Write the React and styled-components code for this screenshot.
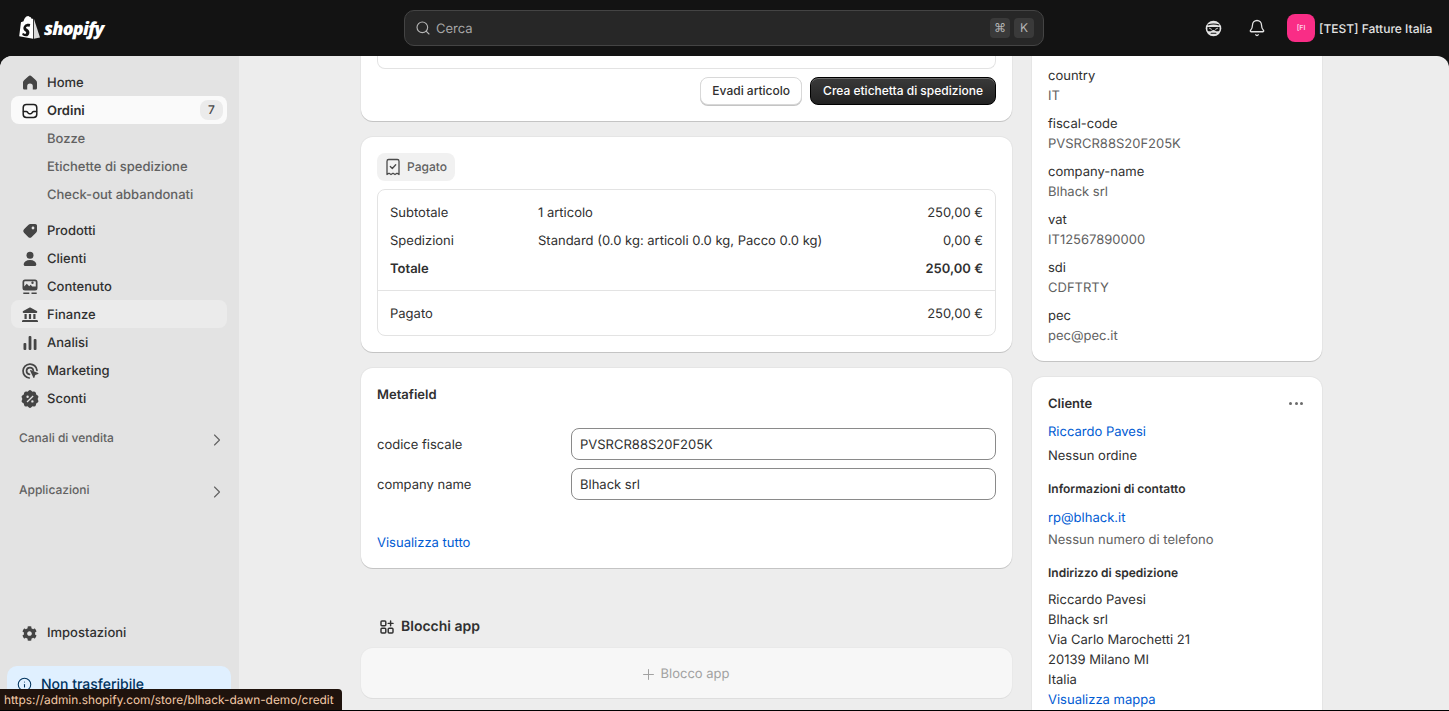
import React from "react";
import styled, { createGlobalStyle, css } from "styled-components";
import { Search, ChevronRight, Plus, Info, Bell } from "lucide-react";
import { FaCog } from "react-icons/fa";

const Global = createGlobalStyle`
  html, body { margin: 0; padding: 0; height: 100%; overflow: hidden; background: #131313; }
  body { font-family: Inter, "Noto Sans", sans-serif; font-size: 13px; line-height: 20px; color: #303030; -webkit-font-smoothing: antialiased; text-rendering: geometricPrecision; }
  * { box-sizing: border-box; }
`;

/* Inter sits one pixel lower in the reference than in this browser's line box */
const textLine = css`
  height: 20px;
  padding-top: 1px;
`;

const Shell = styled.div`
  position: relative;
  width: 1449px; height: 711px;
  display: flex; flex-direction: column;
  border-bottom: 1px solid #000;
  overflow: hidden;
  background: #131313;
  opacity: 0.999;
`;
const TopBar = styled.header`
  flex: 0 0 56px;
  display: grid;
  grid-template-columns: 404px 640px 1fr;
  align-items: center;
  background: #131313;
`;
const Brand = styled.div`
  display: flex; align-items: center; gap: 4px;
  padding-left: 19px;
`;
const Wordmark = styled.span`
  font-family: "Open Sans", sans-serif;
  font-weight: 800; font-style: italic;
  font-size: 18px; line-height: 24px;
  letter-spacing: -0.8px;
  padding-top: 1px;
  color: #fff;
`;
const SearchBox = styled.div`
  height: 36px;
  display: flex; align-items: center; gap: 4px;
  padding: 0 9px 0 10px;
  background: #272727;
  border: 1px solid #444;
  border-radius: 10px;
  color: #b5b5b5;
`;
const SearchLabel = styled.span`
  flex: 1;
  margin-left: 1px;
  padding-top: 2px;
  font-size: 13px; color: #a6a6a6;
`;
const Key = styled.kbd`
  width: 20px; height: 20px;
  display: flex; align-items: center; justify-content: center;
  font-family: Inter, "DejaVu Sans", sans-serif;
  font-size: 12px;
  color: #b5b5b5;
  background: #3a3a3a;
  border-radius: 4px;
`;
const TopRight = styled.div`
  display: flex; align-items: center;
  padding-left: 160px;
  color: #e3e3e3;
`;
const IconSlot = styled.span`
  display: flex; align-items: center; justify-content: center;
  width: 18px; height: 18px;
  margin-right: ${p => p.$mr}px;
`;
const Avatar = styled.span`
  width: 28px; height: 28px; margin-right: 4px;
  display: flex; align-items: center; justify-content: center;
  background: #f92d86; border-radius: 8px;
  font-size: 7px; font-weight: 600; color: #ffd3e6;
`;
const Store = styled.span`
  font-size: 12px; color: #e3e3e3; white-space: nowrap; font-weight: 450;
  padding-top: 1px;
`;

const Frame = styled.div`
  flex: 1; min-height: 0;
  display: flex;
  border-radius: 12px 12px 0 0;
  overflow: hidden;
  background: #ededed;
`;
const Side = styled.nav`
  flex: 0 0 239px;
  display: flex; flex-direction: column;
  padding-top: 12px;
  background: #e3e3e3;
`;
const Row = styled.div`
  height: 28px; margin: 0 12px 0 11px;
  display: flex; align-items: center;
  padding: 2px 4px 0 9px;
  border-radius: 8px;
  font-weight: ${p => (p.$active ? 600 : 500)};
  color: #303030;
  background: ${p => (p.$active ? "#fafafa" : p.$hover ? "#ebebeb" : "transparent")};
  margin-top: ${p => p.$mt || 0}px;
`;
const RowIcon = styled.span`
  flex: 0 0 27px; height: 20px;
  display: flex; align-items: center;
  color: #454545;
`;
const RowLabel = styled.span`
  flex: 1;
`;
const Count = styled.span`
  width: 23px; height: 20px;
  margin-top: -2px;
  display: flex; align-items: center; justify-content: center;
  border-radius: 8px;
  background: #ebebeb;
  font-size: 12px; font-weight: 450; color: #4a4a4a;
`;
const SubRow = styled.div`
  height: 28px; padding: 2px 0 0 47px;
  display: flex; align-items: center;
  font-weight: 450; color: #616161;
`;
const Section = styled.div`
  height: 28px; margin-top: ${p => p.$mt}px;
  display: flex; align-items: center; justify-content: space-between;
  padding: 0 12px 0 19px;
  font-size: 12px; font-weight: 550; color: #616161;
`;
const Chevron = styled.span`
  display: flex; color: #616161; margin-top: 4px;
`;
const Spacer = styled.div` flex: 1; `;
const Notice = styled.div`
  flex: 0 0 44px;
  margin: 20px 8px 0 7px;
  padding: 9px 10px 0;
  display: flex; align-items: flex-start; gap: 9px;
  background: #e0f0ff;
  border-radius: 10px 10px 0 0;
  color: #00345f;
  font-size: 14px;
  font-weight: 500;
  & > svg { margin-top: 2px; }
`;

const Main = styled.main`
  flex: 1; min-width: 0;
  display: grid;
  grid-template-columns: 651px 290px;
  column-gap: 20px;
  align-content: start;
  padding-left: 122px;
  overflow: hidden;
`;
const Col = styled.div`
  display: flex; flex-direction: column; gap: 16px;
  min-width: 0;
`;
const Card = styled.section`
  background: #fff;
  border-radius: ${p => (p.$cut ? "0 0 12px 12px" : "12px")};
  padding: ${p => p.$pad || "16px"};
  box-shadow: 0 1px 0 rgba(26,26,26,.16), 0 0 0 1px rgba(26,26,26,.035);
`;
const CutBox = styled.div`
  height: 13px;
  border: 1px solid #e3e3e3; border-top: 0;
  border-radius: 0 0 8px 8px;
`;
const Actions = styled.div`
  display: flex; justify-content: flex-end; gap: 8px;
  margin-top: 8px;
`;
const Button = styled.button`
  height: 28px;
  padding: 0 ${p => (p.$primary ? 12 : 11)}px;
  font: 550 12px/16px Inter, sans-serif;
  border-radius: 8px;
  border: ${p => (p.$primary ? "1px solid #000" : "1px solid #d8d8d8")};
  color: ${p => (p.$primary ? "#fff" : "#303030")};
  background: ${p => (p.$primary ? "linear-gradient(#3a3a3a, #222)" : "#fff")};
  box-shadow: ${p => (p.$primary ? "inset 0 1px 0 rgba(255,255,255,.25)" : "0 1px 0 #c4c4c4")};
`;
const Badge = styled.span`
  width: 78px; height: 28px;
  display: flex; align-items: center; gap: 4px;
  padding-left: 6px;
  border-radius: 8px;
  background: #f1f1f1;
  font-size: 12px; font-weight: 450; color: #616161;
`;
const Box = styled.div`
  margin-top: 8px;
  border: 1px solid #e3e3e3;
  border-radius: 8px;
`;
const BoxPart = styled.div`
  padding: 8px 12px;
  border-top: ${p => (p.$line ? "1px solid #e3e3e3" : "0")};
`;
const SumRow = styled.div`
  height: 28px;
  padding-top: 2px;
  display: grid; grid-template-columns: 148px 1fr auto;
  align-items: center;
  font-weight: ${p => (p.$bold ? 600 : 400)};
`;
const Title = styled.h2`
  ${textLine}
  margin: 0; font-size: 13px; line-height: 20px; font-weight: 600; color: #303030;
`;
const Fields = styled.div`
  margin-top: 24px;
  display: flex; flex-direction: column; gap: 8px;
`;
const Field = styled.div`
  display: grid; grid-template-columns: 194px 1fr; align-items: center;
`;
const FieldLabel = styled.span`
  ${textLine}
`;
const Input = styled.div`
  height: 32px; padding: 2px 8px 0 8px;
  display: flex; align-items: center;
  border: 1px solid #8a8a8a; border-radius: 8px;
  background: #fff;
  font-weight: 400;
`;
const Link = styled.a`
  ${textLine}
  display: block; color: #005bd3; margin-top: ${p => p.$mt || 0}px; font-weight: 400;
`;
const BlocksHead = styled.div`
  margin-top: 33px;
  display: flex; align-items: center; gap: 6px;
  padding-left: 18px;
  font-size: 14px;
  font-weight: 600;
  color: #303030;
`;
const BlockSlot = styled.div`
  height: 50px; margin-top: -5px;
  padding: 2px 4px 0 0;
  display: flex; align-items: center; justify-content: center; gap: 4px;
  background: #f7f7f7;
  border-radius: 12px;
  box-shadow: 0 1px 0 rgba(26,26,26,.05), 0 0 0 1px rgba(26,26,26,.02);
  color: #a1a1a1;
`;
const Attr = styled.div`
  margin-bottom: 8px;
  &:last-child { margin-bottom: 0; }
`;
const Muted = styled.div`
  ${textLine}
  color: #616161; margin-top: ${p => p.$mt || 0}px;
`;
const Plain = styled.div`
  ${textLine}
  color: #303030; margin-top: ${p => p.$mt || 0}px;
`;
const CardHead = styled.div`
  display: flex; align-items: center; justify-content: space-between;
  margin-bottom: 8px;
`;
const Dots = styled.span`
  display: flex; gap: 2.5px; margin-right: 3px;
  & > i { width: 3px; height: 3px; border-radius: 50%; background: #6b6b6b; }
`;
const Small = styled.h3`
  margin: 14px 0 0; font-size: 12px; line-height: 20px; font-weight: 600; color: #303030;
`;
const StatusTip = styled.div`
  position: absolute; left: 0; bottom: -1px;
  height: 22px; width: 342px;
  padding-left: 4px;
  display: flex; align-items: center;
  background: #1f130d;
  border-radius: 0 4px 0 0;
  font-size: 11.88px; color: #f4cba9;
  white-space: nowrap;
`;

const S = ({ children, fill = "currentColor", size = 20, ...r }) => (
  <svg width={size} height={size} viewBox="0 0 20 20" fill={fill} {...r}>{children}</svg>
);
const stroke = { fill: "none", stroke: "currentColor", strokeWidth: 1.5, strokeLinecap: "round", strokeLinejoin: "round" };

const icons = {
  home: <S><path d="M8.2 3.4a2.6 2.6 0 0 1 3.6 0l3.9 3.6c.9.8 1.3 1.8 1.3 2.9v5.1c0 1-.7 1.6-1.6 1.6h-2.6v-3.4a2.8 2.8 0 0 0-5.6 0v3.4H4.6c-.9 0-1.6-.7-1.6-1.6V9.9c0-1.1.4-2.1 1.3-2.9z"/></S>,
  order: <S><g {...stroke} stroke="#1f1f1f"><rect x="3.2" y="3.5" width="13.6" height="13" rx="3.2"/><path d="M3.5 10.5h2.8c.8 0 1.1.5 1.5 1.1.4.7.8 1.1 1.5 1.1h1.4c.7 0 1.1-.4 1.5-1.1.4-.6.7-1.1 1.5-1.1h2.8"/></g></S>,
  tag: <S><path fillRule="evenodd" d="M10.6 3h4.6C16.2 3 17 3.8 17 4.800v4.600c0 .9-.4 1.700-1 2.300l-4.300 4.300a2.500 2.500 0 0 1-3.500 0l-4.200-4.200a2.500 2.500 0 0 1 0-3.500L8.300 4c.6-.6 1.400-1 2.300-1zM13 8.400a1.400 1.400 0 1 0 0-2.800 1.400 1.400 0 0 0 0 2.800z"/></S>,
  person: <S><circle cx="10" cy="6.300" r="3.500"/><path d="M10 11c-3.700 0-6 1.800-6.300 3.900-.2 1.200.6 2.100 1.800 2.100h9c1.200 0 2-.9 1.800-2.100C16 12.800 13.700 11 10 11z"/></S>,
  content: <S><path fillRule="evenodd" d="M5 2.500h10A2.500 2.500 0 0 1 17.500 5v6a2.500 2.500 0 0 1-2.500 2.500H5A2.500 2.500 0 0 1 2.500 11V5A2.500 2.500 0 0 1 5 2.500zM4.200 9.500l2.600-2.800 2.400 2.500 1.500-1.400 1.500 1.600h3.600V5c0-.5-.3-.8-.8-.8H5c-.5 0-.8.3-.8.8zM12.500 7a1.200 1.200 0 1 0 0-2.400 1.200 1.200 0 0 0 0 2.400z"/><path d="M3.300 15.500h6v1.500h-6zM11.500 15.500h5.200v1.500h-5.200z"/></S>,
  bank: <S><path d="M9.200 2.700c.5-.3 1.100-.3 1.600 0l6 3.300c.9.500.5 1.900-.5 1.900H3.700c-1 0-1.400-1.400-.5-1.900z"/><path d="M4.500 9h2.200v5H4.500zM8.900 9h2.200v5H8.900zM13.300 9h2.200v5h-2.200zM3.300 15h13.400c.7 0 1.300.6 1.300 1.300v.700H2v-.700c0-.7.600-1.300 1.300-1.300z"/></S>,
  bars: <S><rect x="3.500" y="10" width="2.800" height="7" rx="1"/><rect x="8.600" y="3" width="2.800" height="14" rx="1"/><rect x="13.700" y="6" width="2.800" height="11" rx="1"/></S>,
  market: <S><g {...stroke} strokeWidth="1.700"><path d="M17 9.300a7 7 0 1 0-7.700 7.700"/><path d="M13.300 9.500A3.400 3.400 0 1 0 9.500 13.300"/></g><path d="M10 9.600c0-.4.400-.6.700-.5l7.500 2.900c.4.200.4.800 0 .9l-2.900 1-1 2.900c-.1.400-.7.400-.9 0z"/></S>,
  discount: <S><path fillRule="evenodd" d="M8.600 1.800a2 2 0 0 1 2.800 0l1 .9 1.300-.2a2 2 0 0 1 2.200 1.600l.3 1.400 1.200.7a2 2 0 0 1 .8 2.600l-.6 1.200.6 1.200a2 2 0 0 1-.8 2.600l-1.200.7-.3 1.400a2 2 0 0 1-2.200 1.600l-1.300-.2-1 .9a2 2 0 0 1-2.800 0l-1-.9-1.300.2a2 2 0 0 1-2.200-1.600l-.3-1.400-1.200-.7a2 2 0 0 1-.8-2.600l.6-1.200-.6-1.200a2 2 0 0 1 .8-2.600l1.200-.7.3-1.400a2 2 0 0 1 2.200-1.600l1.300.2zM12.700 6.500 6.600 12.600l.9.900 6.100-6.100zM7.600 9a1.200 1.200 0 1 0 0-2.400 1.200 1.200 0 0 0 0 2.400zm4.800 4.600a1.200 1.200 0 1 0 0-2.400 1.200 1.200 0 0 0 0 2.400z"/></S>,
};

const Bag = () => (
  <svg width="21" height="24" viewBox="0 0 21 24">
    <path fill="#fff" d="M13.700 2.700 12.800 3c-.4-1.300-1.100-2.300-2.300-2.300h-.2C10 .3 9.600 0 9.200 0 6.400 0 5 3.500 4.600 5.300l-2 .6c-.6.200-.6.200-.7.800L.2 20.200 14 22.800V2.600z"/>
    <path fill="#d8d8d8" d="M14.800 2.500 21 21.400l-6.200 1.400z"/>
    <path fill="#131313" d="M11.300 8.300l-.8 2.500s-.9-.4-1.900-.4c-1.500 0-1.600.9-1.600 1.200 0 1.300 3.400 1.800 3.400 4.800 0 2.400-1.500 3.900-3.500 3.900-2.400 0-3.700-1.500-3.700-1.500l.7-2.100s1.300 1.100 2.300 1.100c.7 0 1-.5 1-1 0-1.700-2.800-1.800-2.800-4.500 0-2.300 1.700-4.600 5-4.600 1.300 0 1.900.6 1.900.6z"/>
  </svg>
);

const Sidekick = () => (
  <svg width="19" height="19" viewBox="0 0 20 20" fill="none" style={{ flex: "none" }}>
    <circle cx="10" cy="10" r="8.200" fill="#e3e3e3"/>
    <path d="M4 6.200c3.800-1.300 8.200-1.300 12 0" stroke="#131313" strokeWidth="1.100"/>
    <path d="M3.600 8.500h12.800v2.700c0 1-.7 1.600-1.600 1.600h-1.900c-1 0-1.400-1.200-2.900-1.200s-1.900 1.200-2.900 1.200H5.200c-.9 0-1.600-.6-1.600-1.600z" fill="#131313"/>
    <path d="M5.800 9.800l2 1M14.200 9.800l-2 1" stroke="#e3e3e3" strokeWidth="1" strokeLinecap="round"/>
    <path d="M7.500 15h5" stroke="#131313" strokeWidth="1.200" strokeLinecap="round"/>
  </svg>
);
const Receipt = () => (
  <svg width="20" height="20" viewBox="0 0 20 20" fill="none" stroke="#4a4a4a" strokeWidth="1.300" strokeLinecap="round" strokeLinejoin="round">
    <path d="M4 17.500V4.200C4 3.300 4.700 2.500 5.700 2.500h8.600c1 0 1.700.8 1.700 1.700v13.300l-2-1.300-2 1.300-2-1.300-2 1.300-2-1.300z"/>
    <path d="M7.300 9.500l2 2 3.400-3.800"/>
  </svg>
);
const Apps = () => (
  <svg width="16" height="16" viewBox="0 0 20 20" fill="none" stroke="#303030" strokeWidth="1.800" strokeLinecap="round" strokeLinejoin="round">
    <rect x="2.500" y="2.500" width="6" height="6" rx="1.200"/>
    <rect x="2.500" y="11.500" width="6" height="6" rx="1.200"/>
    <rect x="11.500" y="11.500" width="6" height="6" rx="1.200"/>
    <path d="M14.500 2.500v6M11.500 5.500h6"/>
  </svg>
);

const nav = [
  { icon: "tag", label: "Prodotti", mt: 8 },
  { icon: "person", label: "Clienti" },
  { icon: "content", label: "Contenuto" },
  { icon: "bank", label: "Finanze", hover: true },
  { icon: "bars", label: "Analisi" },
  { icon: "market", label: "Marketing" },
  { icon: "discount", label: "Sconti" },
];
const attrs = [
  ["country", "IT"],
  ["fiscal-code", "PVSRCR88S20F205K"],
  ["company-name", "Blhack srl"],
  ["vat", "IT12567890000"],
  ["sdi", "CDFTRTY"],
  ["pec", "pec@pec.it"],
];
const address = ["Blhack srl", "Via Carlo Marochetti 21", "20139 Milano MI", "Italia"];

export default function App() {
  return (
    <Shell>
      <Global />
      <TopBar>
        <Brand><Bag /><Wordmark>shopify</Wordmark></Brand>
        <SearchBox>
          <Search size={16} strokeWidth={1.7} />
          <SearchLabel>Cerca</SearchLabel>
          <Key>⌘</Key>
          <Key>K</Key>
        </SearchBox>
        <TopRight>
          <IconSlot $mr={26}><Sidekick /></IconSlot>
          <IconSlot $mr={21}><Bell size={18} strokeWidth={1.7} /></IconSlot>
          <Avatar>[FI</Avatar>
          <Store>[TEST] Fatture Italia</Store>
        </TopRight>
      </TopBar>
      <Frame>
        <Side>
          <Row><RowIcon>{icons.home}</RowIcon><RowLabel>Home</RowLabel></Row>
          <Row $active><RowIcon>{icons.order}</RowIcon><RowLabel>Ordini</RowLabel><Count>7</Count></Row>
          <SubRow>Bozze</SubRow>
          <SubRow>Etichette di spedizione</SubRow>
          <SubRow>Check-out abbandonati</SubRow>
          {nav.map(n => (
            <Row key={n.label} $mt={n.mt} $hover={n.hover}>
              <RowIcon>{icons[n.icon]}</RowIcon><RowLabel>{n.label}</RowLabel>
            </Row>
          ))}
          <Section $mt={12}>Canali di vendita<Chevron><ChevronRight size={20} strokeWidth={1.3} /></Chevron></Section>
          <Section $mt={24}>Applicazioni<Chevron><ChevronRight size={20} strokeWidth={1.3} /></Chevron></Section>
          <Spacer />
          <Row><RowIcon><FaCog size={15} style={{ marginLeft: 2 }} /></RowIcon><RowLabel>Impostazioni</RowLabel></Row>
          <Notice><Info size={15} strokeWidth={1.7} /><span>Non trasferibile</span></Notice>
        </Side>
        <Main>
          <Col>
            <Card $cut $pad="0 16px 16px">
              <CutBox />
              <Actions>
                <Button>Evadi articolo</Button>
                <Button $primary>Crea etichetta di spedizione</Button>
              </Actions>
            </Card>
            <Card>
              <Badge><Receipt />Pagato</Badge>
              <Box>
                <BoxPart>
                  <SumRow><span>Subtotale</span><span>1 articolo</span><span>250,00 €</span></SumRow>
                  <SumRow><span>Spedizioni</span><span>Standard (0.0 kg: articoli 0.0 kg, Pacco 0.0 kg)</span><span>0,00 €</span></SumRow>
                  <SumRow $bold><span>Totale</span><span /><span>250,00 €</span></SumRow>
                </BoxPart>
                <BoxPart $line>
                  <SumRow><span>Pagato</span><span /><span>250,00 €</span></SumRow>
                </BoxPart>
              </Box>
            </Card>
            <Card>
              <Title>Metafield</Title>
              <Fields>
                <Field><FieldLabel>codice fiscale</FieldLabel><Input>PVSRCR88S20F205K</Input></Field>
                <Field><FieldLabel>company name</FieldLabel><Input>Blhack srl</Input></Field>
              </Fields>
              <Link $mt={32}>Visualizza tutto</Link>
            </Card>
            <BlocksHead><Apps />Blocchi app</BlocksHead>
            <BlockSlot><Plus size={17} strokeWidth={1.4} />Blocco app</BlockSlot>
          </Col>
          <Col>
            <Card $cut $pad="9px 16px 16px">
              {attrs.map(([k, v]) => (
                <Attr key={k}><Plain>{k}</Plain><Muted>{v}</Muted></Attr>
              ))}
            </Card>
            <Card>
              <CardHead><Title>Cliente</Title><Dots><i /><i /><i /></Dots></CardHead>
              <Link>Riccardo Pavesi</Link>
              <Plain $mt={4}>Nessun ordine</Plain>
              <Small>Informazioni di contatto</Small>
              <Link $mt={8}>rp@blhack.it</Link>
              <Muted $mt={2}>Nessun numero di telefono</Muted>
              <Small>Indirizzo di spedizione</Small>
              <Plain $mt={6}>Riccardo Pavesi</Plain>
              {address.map(a => <Plain key={a}>{a}</Plain>)}
              <Link>Visualizza mappa</Link>
            </Card>
          </Col>
        </Main>
      </Frame>
      <StatusTip>https://admin.shopify.com/store/blhack-dawn-demo/credit</StatusTip>
    </Shell>
  );
}
